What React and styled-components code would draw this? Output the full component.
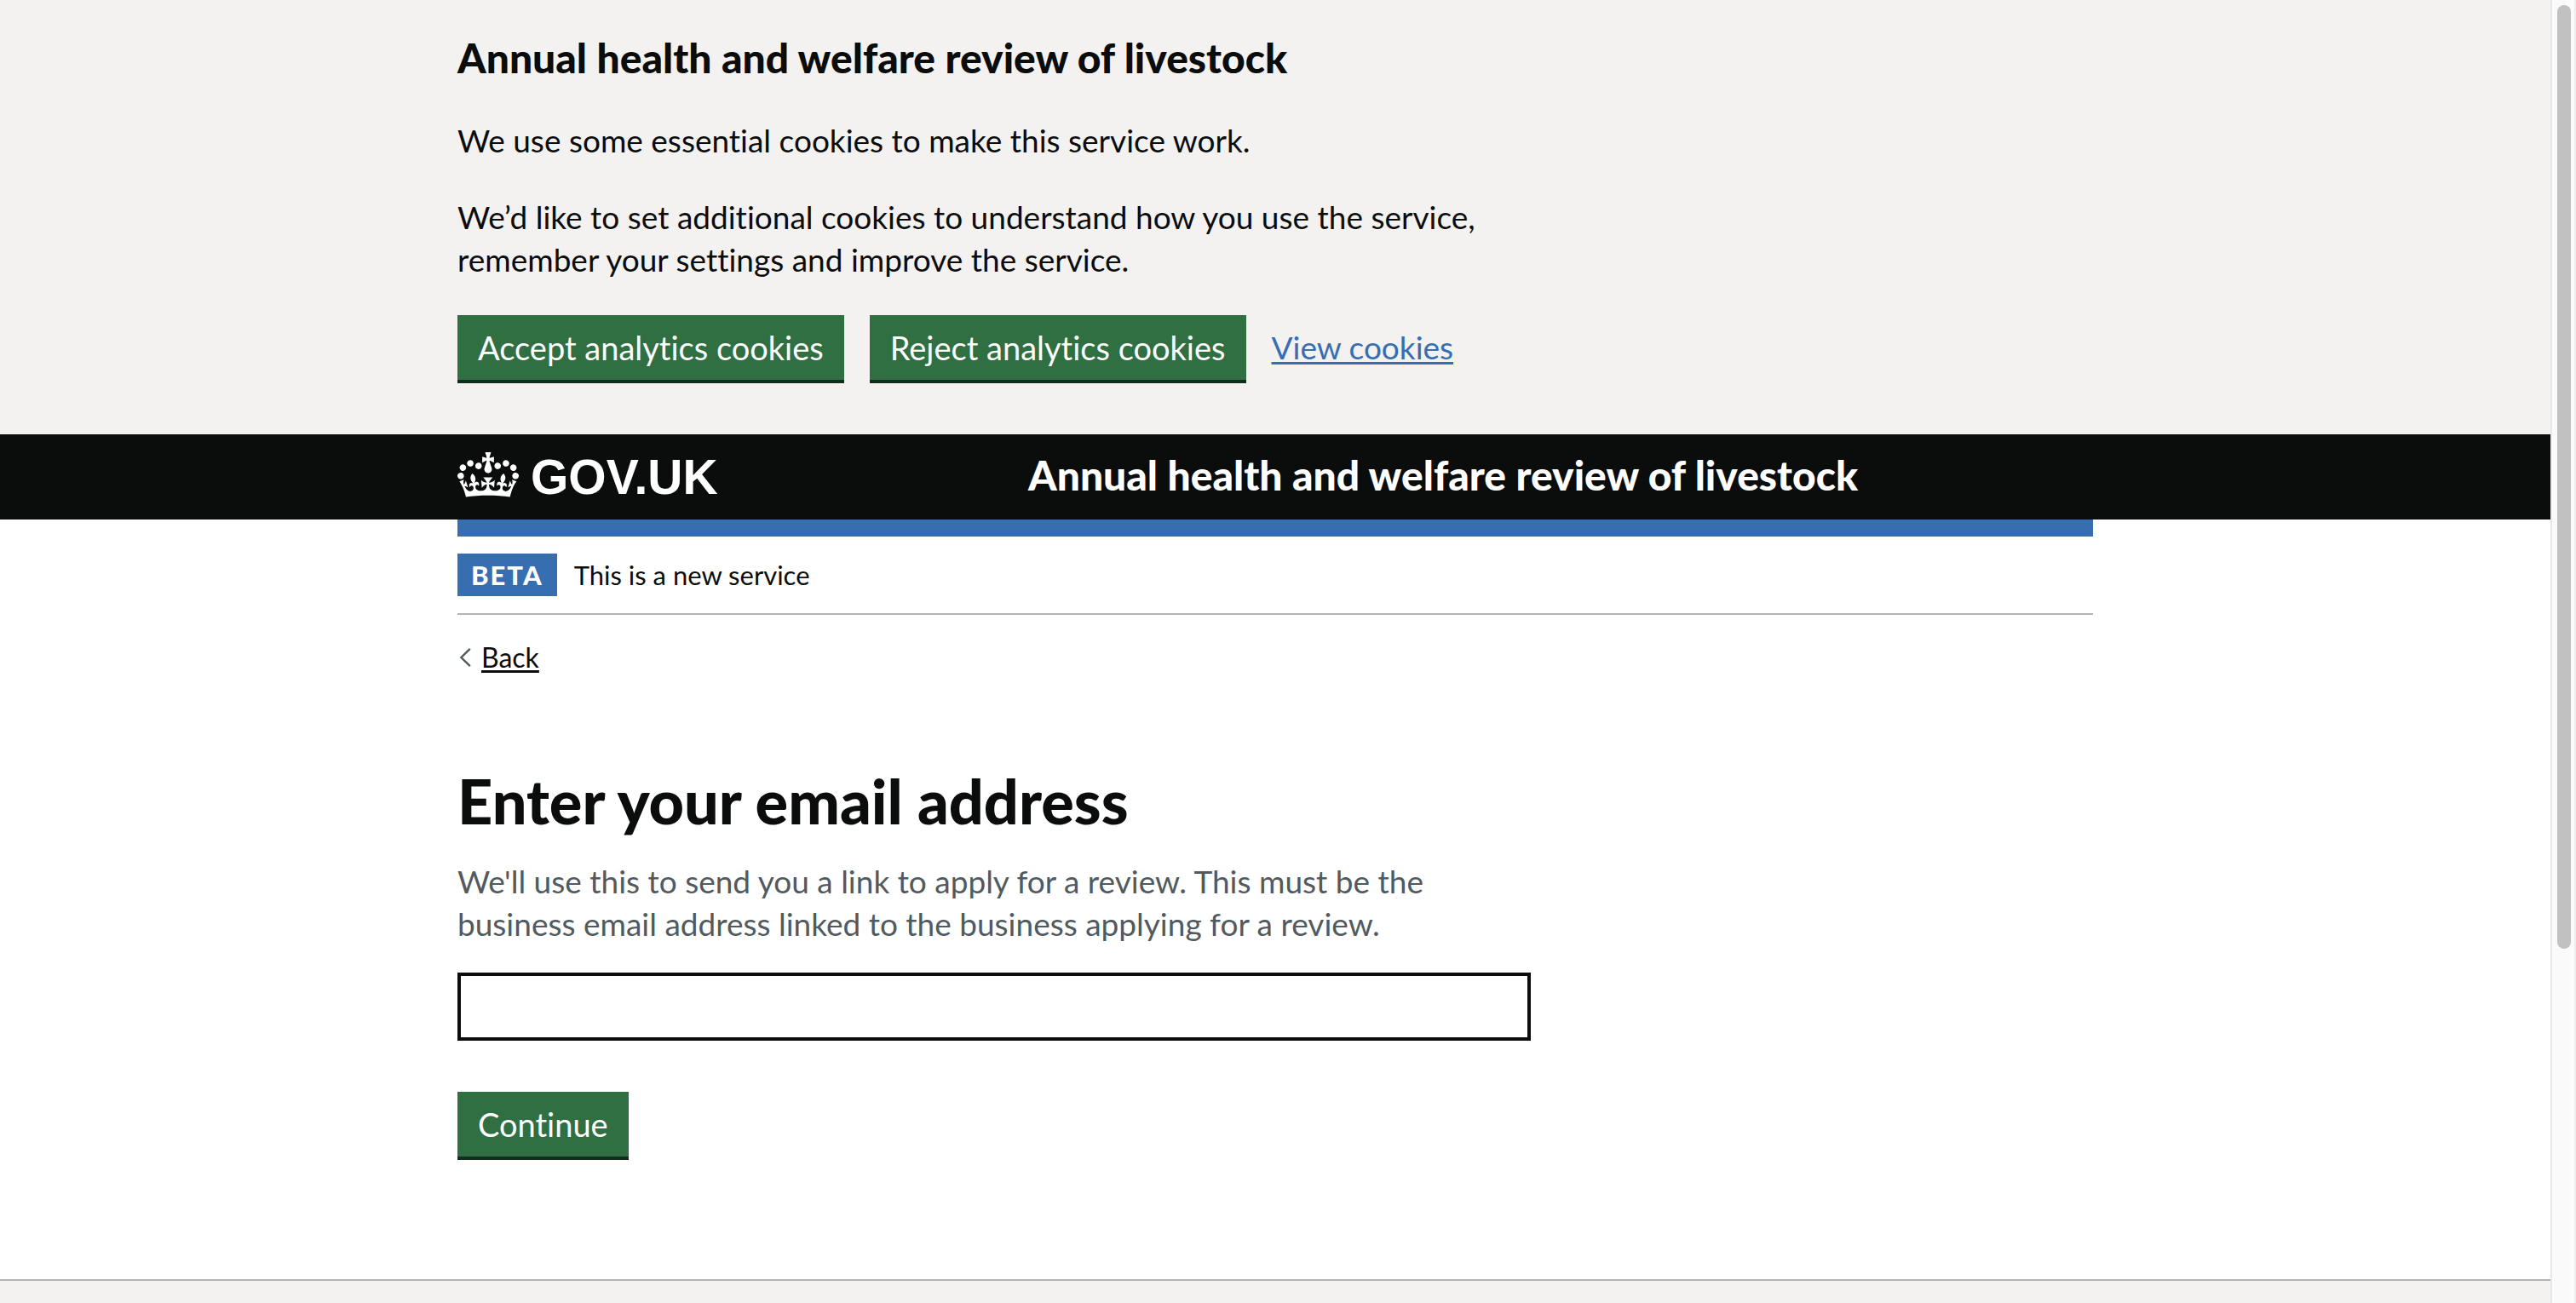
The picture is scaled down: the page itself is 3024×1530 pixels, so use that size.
import React from "react";
import styled, { createGlobalStyle } from "styled-components";

const colour = {
  ink: "#0b0c0c",
  paper: "#ffffff",
  panel: "#f3f2f1",
  blue: "#376eb2",
  green: "#2f6f42",
  greenEdge: "#122d1c",
  rule: "#b3b3b3",
  hint: "#505a5f",
};

const GlobalStyle = createGlobalStyle`
  *, *::before, *::after { box-sizing: border-box; }
  body {
    margin: 0;
    background: ${colour.paper};
    color: ${colour.ink};
    font-family: Lato, "Noto Sans", sans-serif;
    font-variant-ligatures: none;
  }
`;

const Viewport = styled.div`
  display: flex;
  height: 100vh;
  overflow: hidden;
`;

const Page = styled.div`
  flex: 1;
  min-width: 0;
  display: flex;
  flex-direction: column;
`;

const Container = styled.div`
  width: calc(100% - 60px);
  max-width: 1920px;
  margin: 0 auto;
`;

const TwoThirds = styled.div`
  max-width: 1260px;
`;

const CookieBanner = styled.section`
  padding: 40px 0 64px;
  background: ${colour.panel};
`;

const BannerHeading = styled.h2`
  margin: 0 0 44px;
  font-size: 48px;
  line-height: 56px;
  font-weight: 900;
`;

const Paragraph = styled.p`
  margin: 0 0 40px;
  font-size: 37px;
  line-height: 50px;
`;

const ButtonRow = styled.div`
  display: flex;
  flex-wrap: wrap;
  align-items: center;
  gap: 30px;
`;

const Button = styled.button`
  margin: 0;
  padding: 14px 24px;
  border: 0;
  border-radius: 0;
  background: ${colour.green};
  box-shadow: 0 4px 0 ${colour.greenEdge};
  color: ${colour.paper};
  font-family: inherit;
  font-size: 38px;
  font-variant-ligatures: inherit;
  line-height: 48px;
  cursor: pointer;
`;

const TextLink = styled.a`
  color: ${colour.blue};
  font-size: 37px;
  line-height: 50px;
  text-decoration: underline;
  text-decoration-thickness: 3px;
  text-underline-offset: 3px;
`;

const Header = styled.header`
  background: ${colour.ink};
  color: ${colour.paper};
`;

const HeaderGrid = styled(Container)`
  display: grid;
  grid-template-columns: 1fr 2fr;
  align-items: center;
  min-height: 100px;
`;

const LogoLink = styled.a`
  display: flex;
  align-items: center;
  gap: 14px;
  color: inherit;
  font-family: "Liberation Sans", Arial, sans-serif;
  font-size: 57px;
  line-height: 60px;
  font-weight: 700;
  text-decoration: none;
`;

const ServiceName = styled.a`
  padding: 0 0 4px 30px;
  color: inherit;
  font-size: 48px;
  line-height: 60px;
  font-weight: 900;
  text-decoration: none;
`;

const BlueBar = styled.div`
  height: 20px;
  background: ${colour.blue};
`;

const PhaseBanner = styled.div`
  display: flex;
  align-items: center;
  gap: 20px;
  padding: 20px 0;
  border-bottom: 2px solid ${colour.rule};
  font-size: 31px;
  line-height: 50px;
`;

const Tag = styled.strong`
  padding: 0 16px;
  background: ${colour.blue};
  color: ${colour.paper};
  font-weight: 900;
  letter-spacing: 2px;
  text-transform: uppercase;
`;

const BackLink = styled.a`
  display: inline-flex;
  align-items: center;
  margin-top: 30px;
  color: inherit;
  font-size: 32px;
  line-height: 40px;
  text-decoration: none;

  span {
    text-decoration: underline;
    text-decoration-thickness: 3px;
    text-underline-offset: 3px;
  }
`;

const Main = styled.main`
  padding: 108px 0 144px;
`;

const Form = styled.form`
  display: flex;
  flex-direction: column;
  align-items: flex-start;
`;

const Title = styled.h1`
  margin: 0 0 30px;
  font-size: 72px;
  line-height: 80px;
  font-weight: 900;
`;

const Hint = styled.p`
  margin: 0 0 32px;
  max-width: 1180px;
  color: ${colour.hint};
  font-size: 37px;
  line-height: 50px;
`;

const TextInput = styled.input`
  width: 100%;
  height: 80px;
  margin: 0 0 60px;
  padding: 10px;
  border: 4px solid ${colour.ink};
  border-radius: 0;
  background: ${colour.paper};
  color: inherit;
  font-family: inherit;
  font-size: 37px;
  line-height: 50px;
`;

const Footer = styled.footer`
  flex: 1;
  border-top: 2px solid ${colour.rule};
  background: ${colour.panel};
`;

const ScrollTrack = styled.div`
  width: 30px;
  padding: 6px 4px 6px 6px;
  border-left: 2px solid #e8e8e8;
  border-right: 2px solid #ededed;
  background: #fafafa;
`;

const ScrollThumb = styled.div`
  width: 16px;
  height: 73%;
  border-radius: 8px;
  background: #c1c1c1;
`;

function Crown() {
  return (
    <svg width="72" height="58" viewBox="0 0 132 106" fill="currentColor" aria-hidden="true">
      <path
        fillRule="evenodd"
        d="M25 30.2c3.5 1.5 7.7-.2 9.1-3.7 1.5-3.6-.2-7.8-3.9-9.2-3.6-1.4-7.6.3-9.1 3.9-1.4 3.5.3 7.5 3.9 9zM9 39.5c3.6 1.5 7.8-.2 9.2-3.7 1.5-3.6-.2-7.8-3.9-9.1-3.6-1.5-7.6.2-9.1 3.8-1.4 3.5.3 7.5 3.8 9zM4.4 57.2c3.5 1.5 7.7-.2 9.1-3.8 1.5-3.6-.2-7.7-3.9-9.1-3.5-1.5-7.6.3-9.1 3.8-1.4 3.5.3 7.6 3.9 9.1zm38.3-21.4c3.5 1.5 7.7-.2 9.1-3.8 1.5-3.6-.2-7.7-3.9-9.1-3.6-1.5-7.6.3-9.1 3.8-1.3 3.6.4 7.7 3.9 9.1zm64.4-5.6c-3.6 1.5-7.8-.2-9.1-3.7-1.5-3.6.2-7.8 3.8-9.2 3.6-1.4 7.7.3 9.2 3.9 1.3 3.5-.4 7.5-3.9 9zm15.9 9.3c-3.6 1.5-7.7-.2-9.1-3.7-1.5-3.6.2-7.8 3.7-9.1 3.6-1.5 7.7.2 9.2 3.8 1.5 3.5-.3 7.5-3.8 9zm4.7 17.7c-3.6 1.5-7.8-.2-9.2-3.8-1.5-3.6.2-7.7 3.9-9.1 3.6-1.5 7.7.3 9.2 3.8 1.3 3.5-.4 7.6-3.9 9.1zM89.3 35.8c-3.6 1.5-7.8-.2-9.2-3.8-1.4-3.6.2-7.7 3.9-9.1 3.6-1.5 7.7.3 9.2 3.8 1.4 3.6-.3 7.7-3.9 9.1zM69.7 17.7l8.9 4.7V9.3l-8.9 2.8c-.2-.3-.5-.6-.9-.9L72.4 0H59.6l3.5 11.2c-.3.3-.6.5-.9.9l-8.8-2.8v13.1l8.8-4.7c.3.3.6.7.9.9l-5 15.4v.1c-.2.8-.4 1.6-.4 2.4 0 4.1 3.1 7.5 7 8.1h.2c.3 0 .7.1 1 .1.4 0 .7 0 1-.1h.2c4-.6 7.1-4.1 7.1-8.1 0-.8-.1-1.7-.4-2.4V34l-5.1-15.4c.4-.2.7-.6 1-.9zM66 92.8c16.9 0 32.8 1.1 47.1 3.2 4-16.9 8.9-26.7 14-33.5l-9.6-3.4c1 4.9 1.1 7.2 0 10.2-1.5-1.4-3-4.3-4.2-8.7L108.6 76c2.8-2 5-3.2 7.5-3.3-4.4 9.4-10 11.9-13.6 11.2-4.3-.8-6.3-4.6-5.6-7.9 1-4.7 5.7-5.9 8-.5 4.3-8.7-3-11.4-7.6-8.8 7.1-7.2 7.9-13.5 2.1-21.1-8 6.1-8.1 12.3-4.5 20.8-4.7-5.4-12.1-2.5-9.5 6.2 3.4-5.2 7.9-2 7.2 3.1-.6 4.3-6.4 7.8-13.5 7.2-10.3-.9-10.9-8-11.2-13.8 2.5-.5 7.1 1.8 11 7.3L80.2 60c-4.1 4.4-8 5.3-12.3 5.4 1.4-4.4 8-11.6 8-11.6H55.5s6.4 7.2 7.9 11.6c-4.2-.1-8-1-12.3-5.4l1.4 16.4c3.9-5.5 8.5-7.7 10.9-7.3-.3 5.8-.9 12.8-11.1 13.8-7.2.6-12.9-2.9-13.5-7.2-.7-5 3.8-8.3 7.1-3.1 2.7-8.7-4.6-11.6-9.4-6.2 3.7-8.5 3.6-14.7-4.6-20.8-5.8 7.6-5 13.9 2.2 21.1-4.7-2.6-11.9.1-7.7 8.8 2.3-5.5 7.1-4.2 8.1.5.7 3.3-1.3 7.1-5.7 7.9-3.5.7-9-1.8-13.5-11.2 2.5.1 4.7 1.3 7.5 3.3l-4.7-15.4c-1.2 4.4-2.7 7.2-4.3 8.7-1.1-3-.9-5.3 0-10.2l-9.5 3.4c5 6.9 9.9 16.7 14 33.5 14.8-2.1 30.8-3.2 47.7-3.2z"
      />
    </svg>
  );
}

function Chevron() {
  return (
    <svg width="28" height="24" viewBox="0 0 28 24" fill="none" stroke={colour.hint} strokeWidth="2.4" aria-hidden="true">
      <polyline points="14.8 1.8 4.4 12 14.8 22.2" />
    </svg>
  );
}

export default function App() {
  return (
    <>
      <GlobalStyle />
      <Viewport>
        <Page>
          <CookieBanner aria-label="Cookies">
            <Container>
              <TwoThirds>
                <BannerHeading>Annual health and welfare review of livestock</BannerHeading>
                <Paragraph>We use some essential cookies to make this service work.</Paragraph>
                <Paragraph>
                  We’d like to set additional cookies to understand how you use the service,
                  remember your settings and improve the service.
                </Paragraph>
              </TwoThirds>
              <ButtonRow>
                <Button type="button">Accept analytics cookies</Button>
                <Button type="button">Reject analytics cookies</Button>
                <TextLink href="#cookies">View cookies</TextLink>
              </ButtonRow>
            </Container>
          </CookieBanner>

          <Header>
            <HeaderGrid>
              <LogoLink href="#home">
                <Crown />
                <span>GOV.UK</span>
              </LogoLink>
              <ServiceName href="#service">Annual health and welfare review of livestock</ServiceName>
            </HeaderGrid>
          </Header>

          <Container>
            <BlueBar />
            <PhaseBanner>
              <Tag>Beta</Tag>
              <span>This is a new service</span>
            </PhaseBanner>
            <BackLink href="#back">
              <Chevron />
              <span>Back</span>
            </BackLink>
            <Main>
              <TwoThirds>
                <Form onSubmit={(event) => event.preventDefault()}>
                  <Title>
                    <label htmlFor="email">Enter your email address</label>
                  </Title>
                  <Hint id="email-hint">
                    We'll use this to send you a link to apply for a review. This must be the
                    business email address linked to the business applying for a review.
                  </Hint>
                  <TextInput id="email" name="email" type="email" aria-describedby="email-hint" />
                  <Button type="submit">Continue</Button>
                </Form>
              </TwoThirds>
            </Main>
          </Container>

          <Footer />
        </Page>
        <ScrollTrack aria-hidden="true">
          <ScrollThumb />
        </ScrollTrack>
      </Viewport>
    </>
  );
}
